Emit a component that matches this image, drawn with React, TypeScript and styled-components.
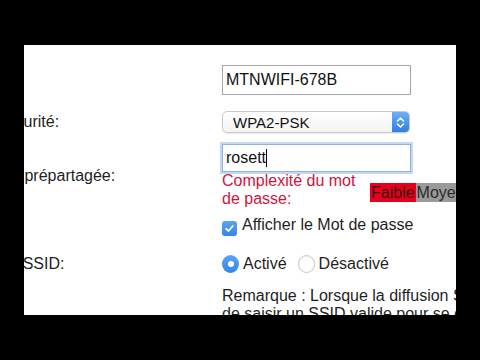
import React from "react";
import styled, { createGlobalStyle } from "styled-components";

const Global = createGlobalStyle`
  html, body {
    margin: 0;
    padding: 0;
    background: #000;
    width: 480px;
    height: 360px;
    overflow: hidden;
    font-family: "Liberation Sans", Arial, Helvetica, sans-serif;
  }
`;

const Panel = styled.div`
  margin: 45px 0 0 24px;
  width: 432px;
  height: 270px;
  background: #fff;
  overflow: hidden;
`;

const Form = styled.div`
  margin-left: -28px;
  padding-top: 20px;
  display: flex;
  flex-direction: column;
`;

const Row = styled.div<{ $gap: number }>`
  display: flex;
  align-items: center;
  margin-top: ${(p) => p.$gap}px;
`;

const Label = styled.div<{ $shift?: number }>`
  width: 226px;
  flex: none;
  white-space: nowrap;
  font-size: 16px;
  line-height: 18px;
  color: #1f1f1f;
  text-indent: ${(p) => p.$shift ?? 0}px;
`;

const Value = styled.div`
  display: flex;
  flex-direction: column;
  white-space: nowrap;
  font-size: 16px;
  color: #1f1f1f;
`;

const TextBox = styled.div`
  width: 189px;
  height: 30px;
  box-sizing: border-box;
  border: 1px solid #a8a8a8;
  padding: 0 3px;
  display: flex;
  align-items: center;
  font-size: 16px;
  color: #111;
  background: #fff;
`;

const PasswordBox = styled(TextBox)`
  height: 28px;
  border-color: #8eb3e2;
  box-shadow: 0 0 0 2px #c3d9f3;
`;

const Caret = styled.span`
  display: inline-block;
  width: 1px;
  height: 18px;
  background: #000;
`;

const SelectBox = styled.div`
  width: 188px;
  height: 22px;
  box-sizing: border-box;
  border: 1px solid #c9c9c9;
  border-radius: 5px;
  display: flex;
  align-items: center;
  background: linear-gradient(#ffffff, #f3f3f3);
  box-shadow: 0 1px 1px rgba(0, 0, 0, 0.08);
  overflow: hidden;
`;

const SelectText = styled.span`
  flex: 1;
  padding: 1px 0 0 10px;
  font-size: 15px;
  color: #111;
`;

const Stepper = styled.span`
  width: 17px;
  height: 100%;
  display: flex;
  align-items: center;
  justify-content: center;
  background: linear-gradient(#6cb2f8, #2f7ee0);
`;

const ComplexityRow = styled.div`
  display: flex;
  align-items: flex-start;
`;

const ComplexityText = styled.div`
  width: 148px;
  white-space: normal;
  color: #d3123c;
  font-size: 16px;
  line-height: 18px;
`;

const StrengthSeg = styled.span<{ $tone: "weak" | "mid" }>`
  margin-top: 11px;
  height: 19px;
  line-height: 19px;
  padding: 0 1px;
  font-size: 16px;
  color: ${(p) => (p.$tone === "weak" ? "#3a0a0f" : "#2a2a2a")};
  background: ${(p) => (p.$tone === "weak" ? "#e6001d" : "#9a9a9a")};
`;

const CheckLine = styled.div`
  display: flex;
  align-items: flex-start;
  line-height: 18px;
`;

const CheckBox = styled.span`
  width: 15px;
  height: 15px;
  margin-top: 5px;
  border-radius: 3px;
  background: linear-gradient(#5aa4f3, #3586e4);
  display: flex;
  align-items: center;
  justify-content: center;
  flex: none;
`;

const OptionText = styled.span<{ $gap: number }>`
  margin-left: ${(p) => p.$gap}px;
  line-height: 18px;
`;

const RadioGroup = styled.div`
  display: flex;
  align-items: center;
  height: 19px;
`;

const Radio = styled.span<{ $on?: boolean; $gap?: number }>`
  box-sizing: border-box;
  width: 17px;
  height: 18px;
  border-radius: 50%;
  margin-left: ${(p) => p.$gap ?? 0}px;
  flex: none;
  display: flex;
  align-items: center;
  justify-content: center;
  background: ${(p) => (p.$on ? "linear-gradient(#5aa4f3, #3586e4)" : "#fff")};
  border: ${(p) => (p.$on ? "none" : "1px solid #c6c6c6")};
  box-shadow: ${(p) => (p.$on ? "none" : "inset 0 1px 1px rgba(0,0,0,0.06)")};
`;

const Dot = styled.span`
  width: 6px;
  height: 6px;
  border-radius: 50%;
  background: #fff;
`;

const Remark = styled.div`
  font-size: 16px;
  line-height: 18px;
  white-space: nowrap;
  color: #1f1f1f;
`;

export default function App() {
  return (
    <>
      <Global />
      <Panel>
        <Form>
          <Row $gap={0}>
            <Label />
            <Value>
              <TextBox>MTNWIFI-678B</TextBox>
            </Value>
          </Row>
          <Row $gap={16}>
            <Label>Sécurité:</Label>
            <Value>
              <SelectBox>
                <SelectText>WPA2-PSK</SelectText>
                <Stepper>
                  <svg width="9" height="13" viewBox="0 0 9 13">
                    <path
                      d="M1.5 5 L4.5 2 L7.5 5 M1.5 8 L4.5 11 L7.5 8"
                      fill="none"
                      stroke="#fff"
                      strokeWidth="1.6"
                      strokeLinecap="round"
                      strokeLinejoin="round"
                    />
                  </svg>
                </Stepper>
              </SelectBox>
            </Value>
          </Row>
          <Row $gap={11}>
            <Label>Clé prépartagée:</Label>
            <Value>
              <PasswordBox>
                rosett
                <Caret />
              </PasswordBox>
              <ComplexityRow>
                <ComplexityText>Complexité du mot de passe:</ComplexityText>
                <StrengthSeg $tone="weak">Faible</StrengthSeg>
                <StrengthSeg $tone="mid">Moyen</StrengthSeg>
              </ComplexityRow>
            </Value>
          </Row>
          <Row $gap={8}>
            <Label />
            <Value>
              <CheckLine>
                <CheckBox>
                  <svg width="11" height="11" viewBox="0 0 11 11">
                    <path
                      d="M2.2 5.8 L4.5 8 L8.8 3"
                      fill="none"
                      stroke="#fff"
                      strokeWidth="1.8"
                      strokeLinecap="round"
                      strokeLinejoin="round"
                    />
                  </svg>
                </CheckBox>
                <OptionText $gap={5}>Afficher le Mot de passe</OptionText>
              </CheckLine>
            </Value>
          </Row>
          <Row $gap={18}>
            <Label $shift={-62}>Diffusion du SSID:</Label>
            <Value>
              <RadioGroup>
                <Radio $on>
                  <Dot />
                </Radio>
                <OptionText $gap={4}>Activé</OptionText>
                <Radio $gap={11} />
                <OptionText $gap={4}>Désactivé</OptionText>
              </RadioGroup>
            </Value>
          </Row>
          <Row $gap={14}>
            <Label />
            <Value>
              <Remark>
                Remarque : Lorsque la diffusion SSID est désactivée, il est nécessaire
                <br />
                de saisir un SSID valide pour se connecter au réseau.
              </Remark>
            </Value>
          </Row>
        </Form>
      </Panel>
    </>
  );
}
